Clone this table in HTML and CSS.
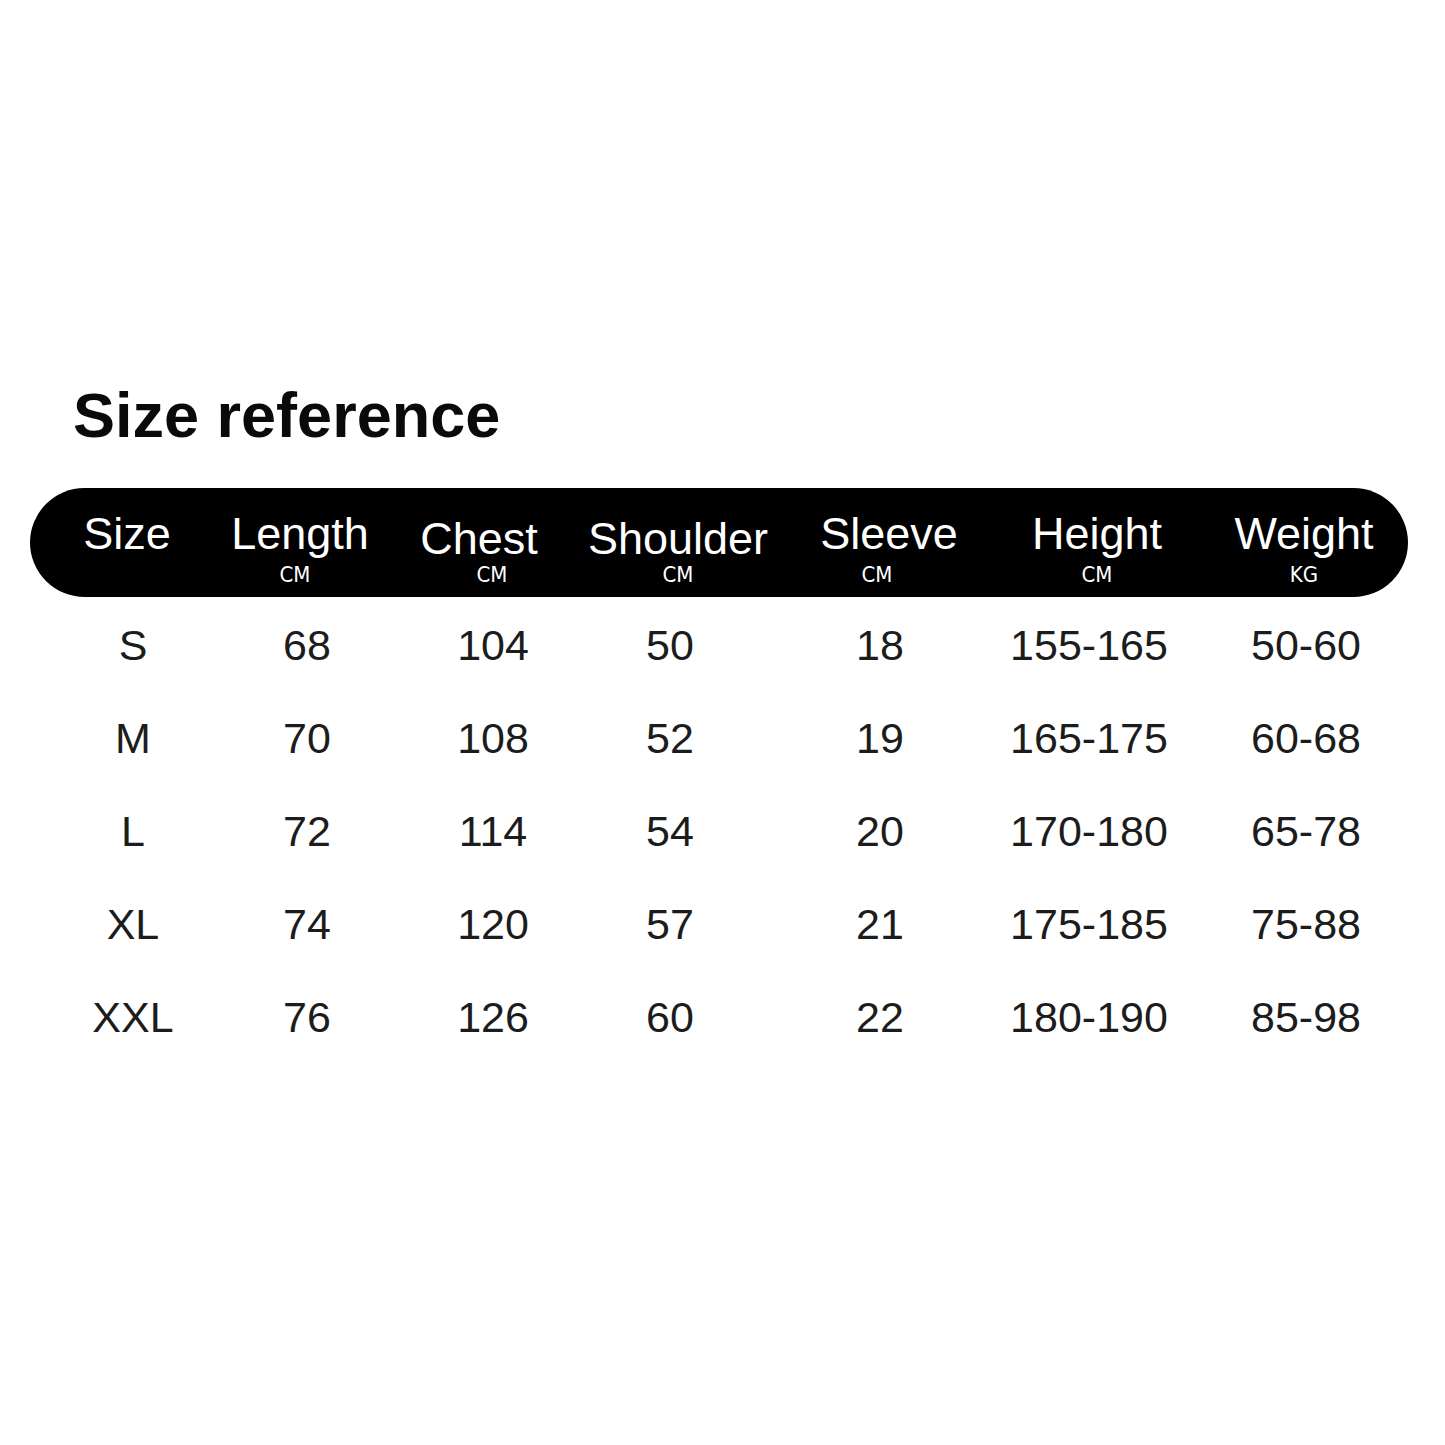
FILE: index.html
```html
<!DOCTYPE html>
<html lang="en">
<head>
<meta charset="utf-8">
<title>Size reference</title>
<link rel="stylesheet" href="styles.css">
</head>
<body>
<main class="page">
  <h1 class="title">Size reference</h1>
  <section class="chart">
    <div class="bar">
      <div class="head"><span class="label">Size</span></div>
      <div class="head"><span class="label">Length</span><span class="unit unit-left-sm">CM</span></div>
      <div class="head"><span class="label low">Chest</span><span class="unit unit-right">CM</span></div>
      <div class="head"><span class="label low">Shoulder</span><span class="unit">CM</span></div>
      <div class="head"><span class="label">Sleeve</span><span class="unit unit-left">CM</span></div>
      <div class="head"><span class="label">Height</span><span class="unit">CM</span></div>
      <div class="head"><span class="label">Weight</span><span class="unit">KG</span></div>
    </div>
    <div class="row"><span>S</span><span>68</span><span>104</span><span>50</span><span>18</span><span>155-165</span><span>50-60</span></div>
    <div class="row"><span>M</span><span>70</span><span>108</span><span>52</span><span>19</span><span>165-175</span><span>60-68</span></div>
    <div class="row"><span>L</span><span>72</span><span>114</span><span>54</span><span>20</span><span>170-180</span><span>65-78</span></div>
    <div class="row"><span>XL</span><span>74</span><span>120</span><span>57</span><span>21</span><span>175-185</span><span>75-88</span></div>
    <div class="row"><span>XXL</span><span>76</span><span>126</span><span>60</span><span>22</span><span>180-190</span><span>85-98</span></div>
  </section>
</main>
</body>
</html>
```

FILE: styles.css
```css
html, body {
  margin: 0;
  padding: 0;
  background: #ffffff;
}

.page {
  padding: 384px 0 0 30px;
  width: 1378px;
  font-family: "Liberation Sans", Arial, sans-serif;
}

.title {
  margin: 0 0 42px 43px;
  font-size: 63px;
  line-height: 62px;
  font-weight: 700;
  color: #0a0a0a;
}

.bar {
  display: grid;
  grid-template-columns: 174px 172px 186px 212px 210px 206px 208px;
  padding-left: 10px;
  background: #000000;
  border-radius: 56px;
  height: 109px;
  box-sizing: border-box;
  padding-top: 24px;
}

.head {
  display: flex;
  flex-direction: column;
  align-items: center;
  color: #ffffff;
}

.label {
  font-size: 45px;
  line-height: 44px;
  height: 44px;
  white-space: nowrap;
}

.label.low {
  margin-top: 5px;
  margin-bottom: -5px;
}

.unit {
  margin-top: 8px;
  font-family: "DejaVu Sans Condensed", "Liberation Sans Narrow", "DejaVu Sans", sans-serif;
  font-size: 22px;
  line-height: 22px;
}

.unit-left-sm {
  margin-right: 10px;
}

.unit-left {
  margin-right: 24px;
}

.unit-right {
  margin-left: 26px;
}

.row {
  display: grid;
  grid-template-columns: 98px 250px 122px 232px 188px 230px 204px;
  padding-left: 54px;
  height: 93px;
  font-size: 43px;
  line-height: 93px;
  color: #1c1c1c;
  text-align: center;
  white-space: nowrap;
}

.bar + .row {
  margin-top: 2px;
}
```
